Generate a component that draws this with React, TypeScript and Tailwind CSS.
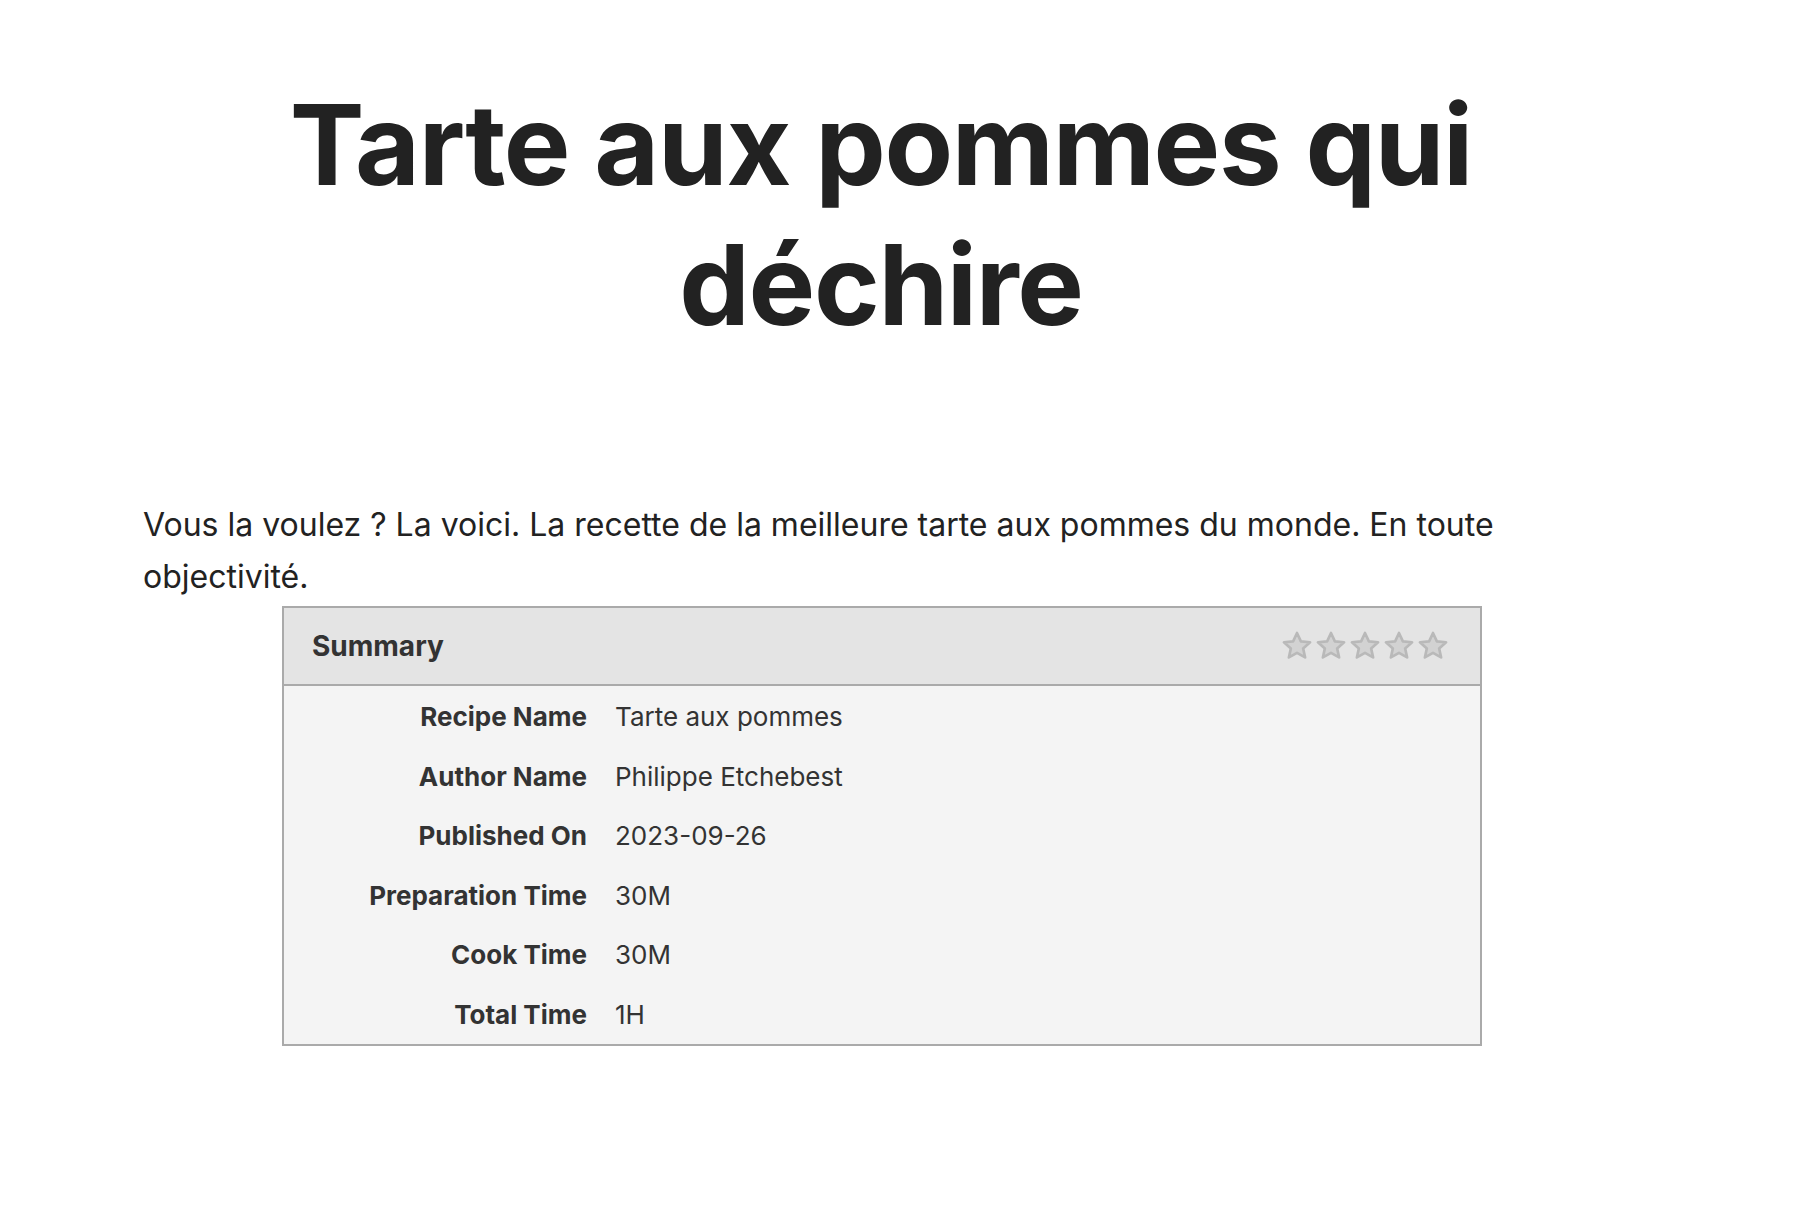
const rows: [string, string][] = [
  ['Recipe Name', 'Tarte aux pommes'],
  ['Author Name', 'Philippe Etchebest'],
  ['Published On', '2023-09-26'],
  ['Preparation Time', '30M'],
  ['Cook Time', '30M'],
  ['Total Time', '1H'],
];

function Star() {
  return (
    <svg width="34" height="32" viewBox="0 0 24 24" className="block">
      <path
        d="M12 2.2l2.9 6.3 6.9.7-5.2 4.6 1.5 6.8L12 17.1l-6.1 3.5 1.5-6.8-5.2-4.6 6.9-.7z"
        fill="#d2d2d2"
        stroke="#b9b9b9"
        strokeWidth="2"
        strokeLinejoin="round"
      />
    </svg>
  );
}

export default function App() {
  return (
    <div className="min-h-screen bg-white font-['Inter',sans-serif] text-[#222]">
      <div className="ml-[143px] w-[1476px] pt-[74px]">
        {/* Titre */}
        <h1 className="text-center text-[112px] font-bold leading-[140px] tracking-[-0.012em] text-[#222]">
          Tarte aux pommes qui déchire
        </h1>

        <p className="mt-[145px] text-[32px] leading-[52px] text-[#222]">
          Vous la voulez ? La voici. La recette de la meilleure tarte aux pommes du monde. En toute objectivité.
        </p>

        {/* Summary */}
        <div className="ml-[139px] mt-[3px] w-[1200px] border-2 border-[#aaaaaa] bg-[#f4f4f4] text-[#333]">
          <div className="flex h-[78px] items-center justify-between border-b-2 border-[#aaaaaa] bg-[#e4e4e4] pl-[28px] pr-[30px]">
            <span className="text-[28px] font-bold">Summary</span>
            <div className="flex">
              {[0, 1, 2, 3, 4].map((i) => (
                <Star key={i} />
              ))}
            </div>
          </div>
          <div className="pt-[1px]">
            {rows.map(([label, value]) => (
              <div key={label} className="grid h-[59.5px] grid-cols-[303px_1fr] items-center gap-x-[28px] text-[26px]">
                <span className="text-right font-bold">{label}</span>
                <span>{value}</span>
              </div>
            ))}
          </div>
        </div>
      </div>
    </div>
  );
}
